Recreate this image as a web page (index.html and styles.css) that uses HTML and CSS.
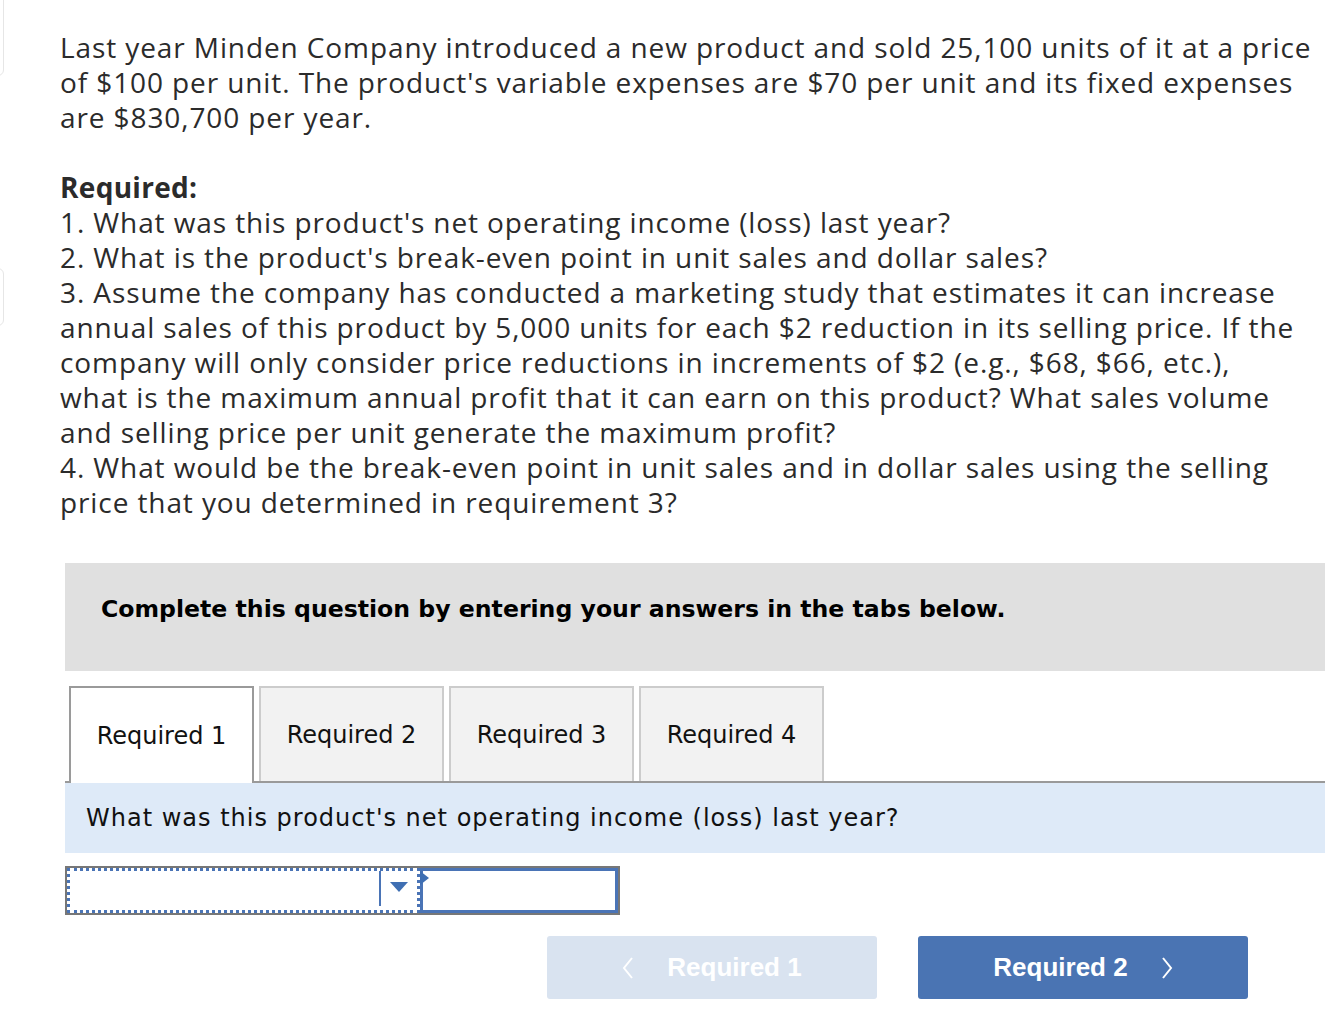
FILE: index.html
```html
<!DOCTYPE html>
<html>
<head>
<meta charset="utf-8">
<link rel="stylesheet" href="styles.css">
</head>
<body>
<div class="edge edge-top"></div>
<div class="edge edge-mid"></div>
<div class="page">
  <div class="problem">
    <p>Last year Minden Company introduced a new product and sold 25,100 units of it at a price of $100 per unit. The product's variable expenses are $70 per unit and its fixed expenses are $830,700 per year.</p>
    <p class="required"><strong>Required:</strong><br>
    1. What was this product's net operating income (loss) last year?<br>
    2. What is the product's break-even point in unit sales and dollar sales?<br>
    3. Assume the company has conducted a marketing study that estimates it can increase annual sales of this product by 5,000 units for each $2 reduction in its selling price. If the company will only consider price reductions in increments of $2 (e.g., $68, $66, etc.), what is the maximum annual profit that it can earn on this product? What sales volume and selling price per unit generate the maximum profit?<br>
    4. What would be the break-even point in unit sales and in dollar sales using the selling price that you determined in requirement 3?</p>
  </div>

  <div class="work">
    <div class="instructions">Complete this question by entering your answers in the tabs below.</div>

    <div class="tabs">
      <div class="tab active">Required 1</div>
      <div class="tab">Required 2</div>
      <div class="tab">Required 3</div>
      <div class="tab">Required 4</div>
    </div>

    <div class="band">What was this product's net operating income (loss) last year?</div>

    <div class="answer">
      <div class="select">
        <div class="select-field"></div>
        <div class="select-arrow"><svg width="18" height="10" viewBox="0 0 18 10"><path d="M0 0 H18 L9 10 Z" fill="#3f6fb3"/></svg></div>
      </div>
      <div class="input">
        <svg class="input-flag" width="9" height="14" viewBox="0 0 9 14"><path d="M0 0 L9 7 L0 14 Z" fill="#3f6fb3"/></svg>
      </div>
    </div>

    <div class="nav">
      <button class="btn btn-prev"><svg width="12" height="22" viewBox="0 0 12 22"><path d="M10 1 L2 11 L10 21" fill="none" stroke="#fff" stroke-width="2"/></svg><span>Required 1</span></button>
      <button class="btn btn-next"><span>Required 2</span><svg width="12" height="22" viewBox="0 0 12 22"><path d="M2 1 L10 11 L2 21" fill="none" stroke="#fff" stroke-width="2"/></svg></button>
    </div>
  </div>
</div>
</body>
</html>
```

FILE: styles.css
```css
html, body {
  margin: 0;
  padding: 0;
  background: #fff;
}

.edge {
  position: absolute;
  left: -40px;
  width: 42px;
  border: 1px solid #e6e6e6;
  border-radius: 6px;
  background: #fff;
}
.edge-top { top: -10px; height: 84px; }
.edge-mid { top: 268px; height: 56px; }

.page {
  padding: 30px 18px 40px 60px;
}

.problem {
  margin-right: 12px;
  font-family: "Open Sans", "Liberation Sans", sans-serif;
  font-size: 28px;
  letter-spacing: 0.9px;
  line-height: 35px;
  color: #2b2b2b;
}

.problem p {
  margin: 0 0 35px 0;
}
.problem p:last-child { margin-bottom: 0; }

.problem .required { margin-right: 13px; }

.problem strong { font-weight: 700; letter-spacing: 0.3px; }

.work {
  margin-top: 43px;
  margin-left: 5px;
}

.instructions {
  box-sizing: border-box;
  background: #e0e0e0;
  height: 108px;
  display: flex;
  align-items: center;
  padding-left: 36px;
  padding-bottom: 16px;
  font-family: "DejaVu Sans", Verdana, sans-serif;
  font-weight: bold;
  font-size: 23.6px;
  color: #000;
}

.tabs {
  margin-top: 15px;
  display: flex;
  gap: 5px;
  padding-left: 4px;
  border-bottom: 2px solid #9a9a9a;
  height: 95px;
}

.tab {
  box-sizing: border-box;
  width: 185px;
  height: 95px;
  background: #f2f2f2;
  border: 2px solid #cccccc;
  border-bottom: none;
  display: flex;
  align-items: center;
  justify-content: center;
  font-family: "DejaVu Sans", Verdana, sans-serif;
  font-size: 24px;
  color: #111;
}

.tab.active {
  background: #fff;
  border-color: #9a9a9a;
  height: 97px;
  position: relative;
  z-index: 1;
}

.band {
  background: #deeaf8;
  height: 70px;
  display: flex;
  align-items: center;
  padding-left: 21px;
  font-family: "DejaVu Sans", Verdana, sans-serif;
  font-size: 24px;
  letter-spacing: 1px;
  color: #111;
}

.answer {
  margin-top: 13px;
  display: flex;
  width: 555px;
  height: 49px;
  box-sizing: border-box;
  border: 2px solid #777;
}

.select {
  box-sizing: border-box;
  width: 353px;
  height: 45px;
  border: 3px dotted #4a74b6;
  display: flex;
  background: #fff;
}

.select-field {
  flex: 1;
  border-right: 2px solid #4a74b6;
  margin: 0 0 4px 0;
}

.select-arrow {
  width: 36px;
  display: flex;
  align-items: center;
  justify-content: center;
  padding-bottom: 8px;
}

.input {
  flex: 1;
  box-sizing: border-box;
  border: 3px solid #4a74b6;
  position: relative;
  background: #fff;
}

.input-flag {
  position: absolute;
  left: -3px;
  top: 0px;
}

.nav {
  margin-top: 21px;
  display: flex;
  justify-content: flex-end;
  gap: 41px;
  padding-right: 77px;
}

.btn {
  width: 330px;
  height: 63px;
  border: none;
  border-radius: 3px;
  display: flex;
  align-items: center;
  justify-content: center;
  gap: 33px;
  font-family: "Liberation Sans", Arial, sans-serif;
  font-weight: bold;
  font-size: 26px;
  color: #fff;
  padding: 0;
}

.btn-prev {
  background: #d9e3f0;
}

.btn-next {
  background: #4a74b3;
}
```
